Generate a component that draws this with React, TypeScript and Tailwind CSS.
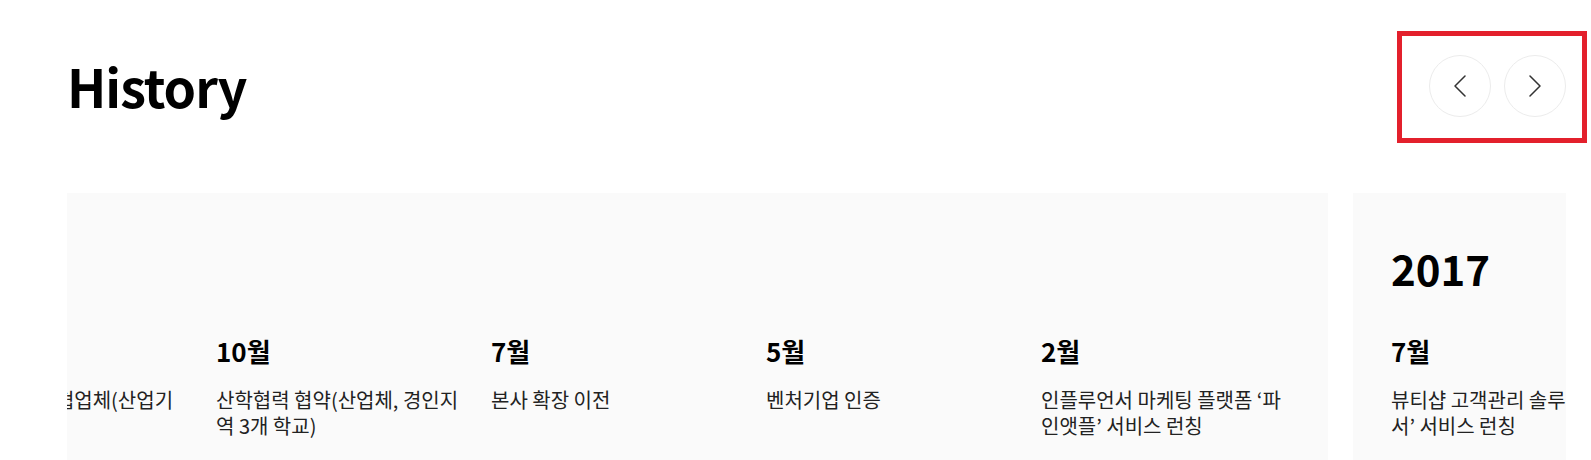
type Item = { month: string; text: string };
type Year = { year: string; items: Item[] };

const years: Year[] = [
  {
    year: '2018',
    items: [
      { month: '12월', text: '산학연구개발 협업체(산업기술 진흥원)' },
      { month: '10월', text: '산학협력 협약(산업체, 경인지역 3개 학교)' },
      { month: '7월', text: '본사 확장 이전' },
      { month: '5월', text: '벤처기업 인증' },
      { month: '2월', text: '인플루언서 마케팅 플랫폼 ‘파인앳플’ 서비스 런칭' },
    ],
  },
  {
    year: '2017',
    items: [
      { month: '7월', text: '뷰티샵 고객관리 솔루션 ‘뷰티서’ 서비스 런칭' },
      { month: '3월', text: '법인 설립' },
    ],
  },
];

function Chevron({ dir }: { dir: 'left' | 'right' }) {
  return (
    <svg width="12" height="22" viewBox="0 0 12 22" fill="none" aria-hidden="true">
      <polyline
        points={dir === 'left' ? '11,1 1,11 11,21' : '1,1 11,11 1,21'}
        stroke="#333333"
        strokeWidth="1.5"
        strokeLinecap="round"
        strokeLinejoin="round"
      />
    </svg>
  );
}

export default function App() {
  return (
    <section
      className="w-[1591px] h-[460px] overflow-hidden bg-white pl-[67px] pr-[25px] pt-[55px] text-[#111]"
      style={{ fontFamily: '"Noto Sans CJK KR", "Noto Sans", sans-serif' }}
    >
      {/* header */}
      <div className="flex items-center justify-between">
        <h2 className="text-[52px] font-bold leading-[1.2] tracking-[-1px] text-black">History</h2>
        <div className="relative flex gap-[13px]">
          <button className="flex h-[62px] w-[62px] items-center justify-center rounded-full border border-[#ececec] bg-white">
            <Chevron dir="left" />
          </button>
          <button className="flex h-[62px] w-[62px] items-center justify-center rounded-full border border-[#ececec] bg-white">
            <Chevron dir="right" />
          </button>
          {/* highlight box */}
          <div className="pointer-events-none absolute -left-[32px] -right-[21px] -top-[24px] -bottom-[26px] border-[5px] border-[#e3202c]" />
        </div>
      </div>

      {/* slider */}
      <div className="mt-[76px] overflow-hidden">
        <div className="flex gap-[25px] -ml-[164px]">
          {years.map((y) => (
            <div key={y.year} className="shrink-0 bg-[#fafafa] pl-[38px] pr-[42px] pt-[50px] pb-[60px]">
              <div className="text-[42px] font-bold leading-[1.2] text-black">{y.year}</div>
              <div className="mt-[41px] flex gap-[30px]">
                {y.items.map((it) => (
                  <div key={it.month + it.text} className="w-[245px] shrink-0">
                    <div className="text-[26px] font-bold leading-[1.2] text-black">{it.month}</div>
                    <p className="mt-[21px] text-[20px] leading-[1.3] text-[#222]">{it.text}</p>
                  </div>
                ))}
              </div>
            </div>
          ))}
        </div>
      </div>
    </section>
  );
}
